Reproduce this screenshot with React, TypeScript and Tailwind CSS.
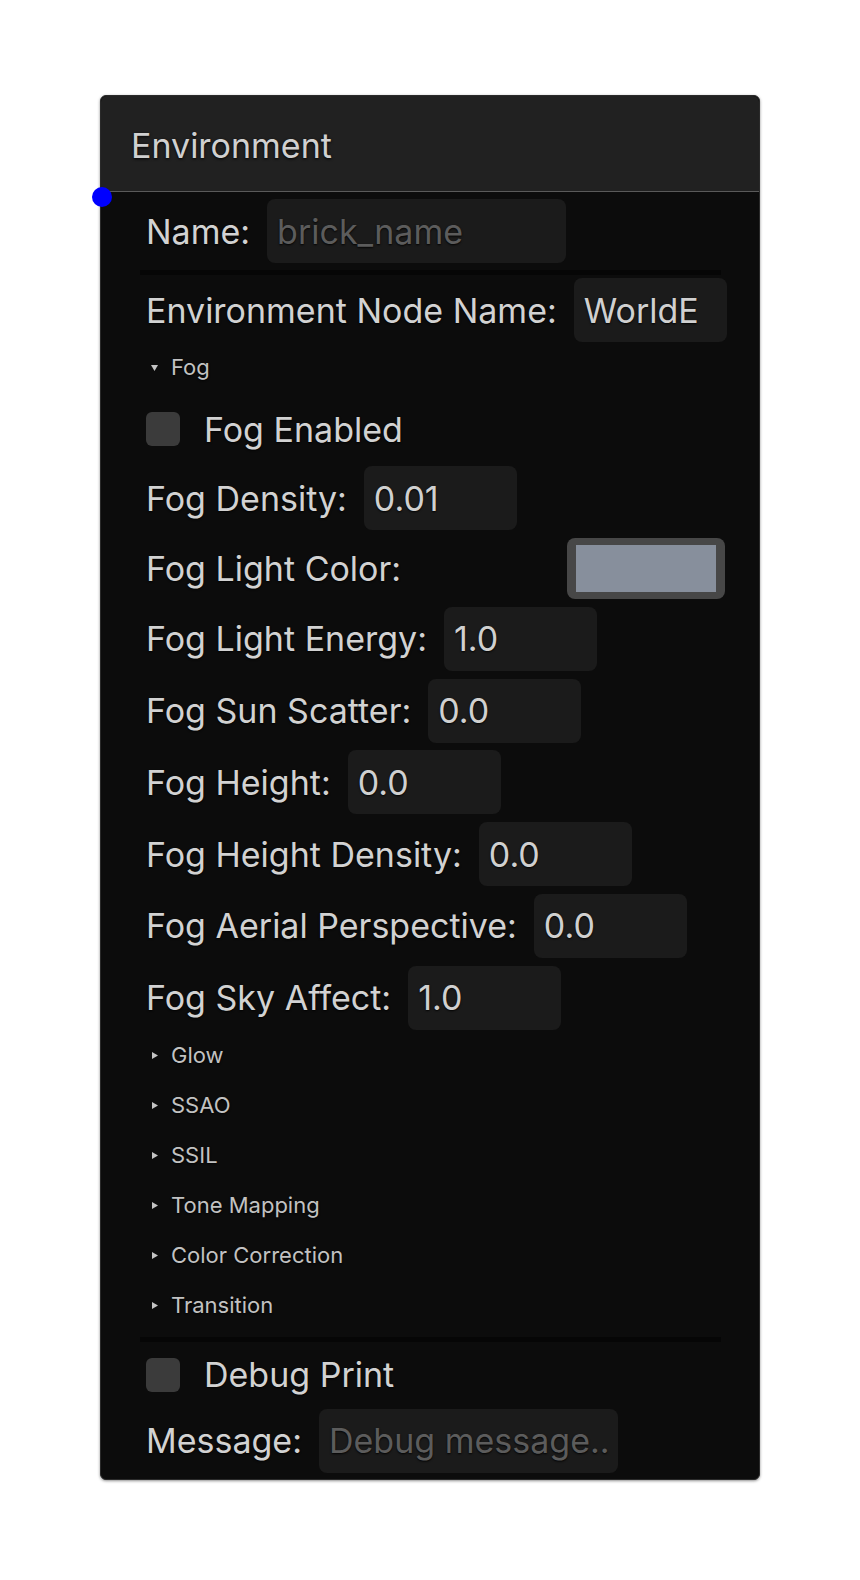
import React from "react";

const FONT = "font-['Inter','Noto_Sans',sans-serif]";

const FOG_FIELDS: { label: string; value: string }[] = [
  { label: "Fog Light Energy:", value: "1.0" },
  { label: "Fog Sun Scatter:", value: "0.0" },
  { label: "Fog Height:", value: "0.0" },
  { label: "Fog Height Density:", value: "0.0" },
  { label: "Fog Aerial Perspective:", value: "0.0" },
  { label: "Fog Sky Affect:", value: "1.0" },
];

const SECTIONS = ["Glow", "SSAO", "SSIL", "Tone Mapping", "Color Correction", "Transition"];

function Field({
  label,
  value,
  placeholder,
  wide,
}: {
  label: string;
  value?: string;
  placeholder?: string;
  wide?: boolean;
}) {
  return (
    <div className="flex items-center gap-[17px] h-[64px] shrink-0">
      <span className="text-[34px] text-[#d2d2d2] whitespace-nowrap">{label}</span>
      <div
        className={`${wide ? "w-[299px]" : "w-[153px]"} h-[64px] shrink-0 rounded-lg bg-[#1b1b1b] px-[10px] flex items-center whitespace-nowrap text-[34px] ${
          value ? "text-[#d0d0d0]" : "text-[#5c5c5c]"
        }`}
      >
        {value ?? placeholder}
      </div>
    </div>
  );
}

function Checkbox({ label }: { label: string }) {
  return (
    <div className="flex items-center gap-[24px] h-[48px] shrink-0">
      <div className="w-[34px] h-[34px] rounded-md bg-[#3b3b3b]" />
      <span className="text-[34px] text-[#d2d2d2]">{label}</span>
    </div>
  );
}

function Summary({ label, open }: { label: string; open?: boolean }) {
  return (
    <div className="flex items-center h-[36px] shrink-0 pl-[5px]">
      <svg width="7" height="7" viewBox="0 0 7 7" className="mr-[13px]">
        {open ? <path d="M0 1h7L3.5 7z" fill="#c4c4c4" /> : <path d="M1 0l6 3.5L1 7z" fill="#c4c4c4" />}
      </svg>
      <span className="text-[22px] text-[#c2c2c2]">{label}</span>
    </div>
  );
}

function Separator() {
  return <div className="h-[5px] ml-[-6px] mr-[4px] bg-[#060606] shrink-0" />;
}

export default function App() {
  return (
    <div className={`w-[860px] h-[1580px] bg-white pt-[95px] pl-[100px] ${FONT}`}>
      <div className="relative w-[660px] h-[1385px] rounded-[6px] bg-[#0c0c0c] border border-[#2a2a2a] shadow-[0_1px_3px_rgba(0,0,0,0.45)] flex flex-col">
        {/* header */}
        <div className="h-[96px] shrink-0 rounded-t-[6px] bg-[#212121] border-b border-[#5a5a5a] flex items-center pl-[30px] pt-[3px]">
          <span className="text-[34px] text-[#d0d0d0] [text-shadow:0_1px_3px_rgba(0,0,0,0.9)]">Environment</span>
        </div>
        <span className="absolute left-[-9px] top-[91px] w-[20px] h-[20px] rounded-full bg-[#0000ff]" />

        {/* body */}
        <div className="flex flex-col pl-[45px] pr-[34px] pt-[7px] [text-shadow:0_1px_2px_rgba(0,0,0,0.9)]">
          <Field label="Name:" placeholder="brick_name" wide />
          <div className="mt-[7px] mb-[3px]">
            <Separator />
          </div>
          <Field label="Environment Node Name:" value="WorldE" />

          <div className="mt-[7px]">
            <Summary label="Fog" open />
          </div>
          <div className="mt-[20px]">
            <Checkbox label="Fog Enabled" />
          </div>
          <div className="mt-[13px]">
            <Field label="Fog Density:" value="0.01" />
          </div>
          <div className="mt-[8px] flex items-center justify-between h-[61px]">
            <span className="text-[34px] text-[#d2d2d2]">Fog Light Color:</span>
            <div className="w-[158px] h-[61px] rounded-lg bg-[#474747] px-[9px] py-[7px]">
              <div className="w-full h-full bg-[#878f9c]" />
            </div>
          </div>
          <div className="mt-[7.8px] flex flex-col gap-[7.8px]">
            {FOG_FIELDS.map((f) => (
              <Field key={f.label} label={f.label} value={f.value} />
            ))}
          </div>

          <div className="mt-[8px] flex flex-col gap-[14px]">
            {SECTIONS.map((s) => (
              <Summary key={s} label={s} />
            ))}
          </div>

          <div className="mt-[13px]">
            <Separator />
          </div>
          <div className="mt-[9px]">
            <Checkbox label="Debug Print" />
          </div>
          <div className="mt-[10px]">
            <Field label="Message:" placeholder="Debug message.." wide />
          </div>
        </div>
      </div>
    </div>
  );
}
